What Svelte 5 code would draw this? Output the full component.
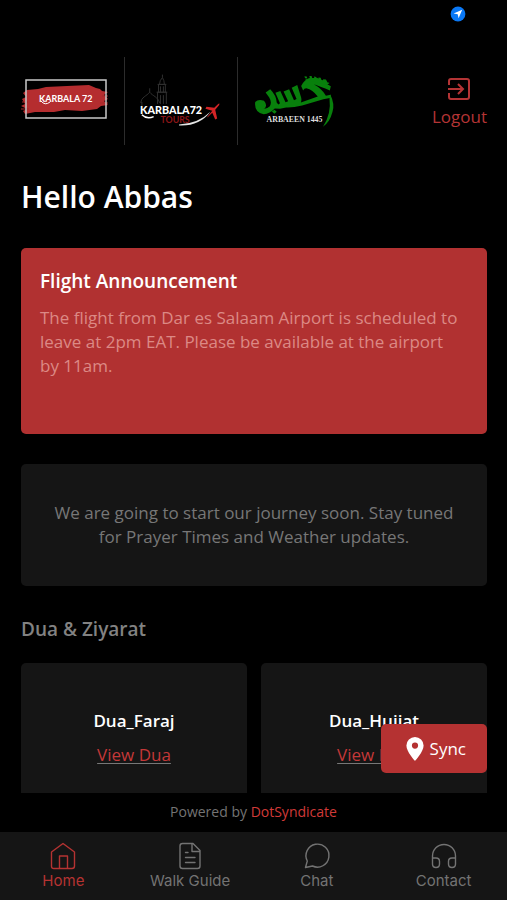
<script>
  const duas = ['Dua_Faraj', 'Dua_Hujjat'];
  const tabs = [
    { label: 'Home', icon: 'home', active: true },
    { label: 'Walk Guide', icon: 'guide' },
    { label: 'Chat', icon: 'chat' },
    { label: 'Contact', icon: 'contact' }
  ];
</script>

<div class="app">
  <div class="status">
    <svg width="16" height="16" viewBox="0 0 16 16" aria-hidden="true">
      <circle cx="8" cy="8" r="7.4" fill="#0a78f5" />
      <path d="M12.2 3.8 3.6 7.5 7.7 8.3 8.6 12.3Z" fill="#fff" />
    </svg>
  </div>

  <header>
    <div class="logos">
      <div class="logo">
        <svg viewBox="0 0 90 88" role="img" aria-label="Karbala 72">
          <path
            d="M3 36 7 33 18 32 26 30 47 29 69 28 76 31 80 32 82 34 88 35 84 38 88 42 84 44 88 48 81 49 77 52 62 54 45 53 34 55 15 55 5 57 3 54 7 52 1 49 5 47 2 42 6 40Z"
            fill="#b52d2f"
          />
          <path d="M2 45h6M1 52h8M82 39h6M80 46h8" stroke="#a3282a" stroke-width="1" />
          <rect x="6" y="23" width="80" height="38" fill="none" stroke="#c9c9c9" stroke-width="1.5" />
          <text x="19" y="45" class="brand-small">KARBALA 72</text>
          <path d="M21 44q4 5 9 1" fill="none" stroke="#fff" />
        </svg>
      </div>
      <div class="logo">
        <svg viewBox="0 0 90 88" role="img" aria-label="Karbala 72 Tours">
          <g fill="none" stroke="#303030" stroke-width="1">
            <path d="M5 49V45M4 46c0-6 6-7 9-11 3 4 9 5 10 11M13 35v-4" />
            <path d="M21 47V35h9v12M20 35h11M22 35V27h7v8M21 27h9M23 27q0-4 3-7 2 3 2 7M26 20v-3M24 29v6M27 29v6M24 38v9M27 38v9" />
          </g>
          <text x="24" y="66" class="tours">TOURS</text>
          <text x="3" y="57" class="brand">KARBALA72</text>
          <path d="M5 58q5 5 12 2" fill="none" stroke="#fff" stroke-width="1.5" />
          <path d="M43 68Q63 67 75 55 64 70 43 69Z" fill="#e5e5e5" />
          <path d="M72 60 77 54 70 52 71 50 79 51 83 47q2-1 1 1l-4 5 2 9-2 1-3-7-5 5Z" fill="#d52426" />
        </svg>
      </div>
      <div class="logo">
        <svg viewBox="0 0 90 88" role="img" aria-label="Husain, Arbaeen 1445">
          <g transform="translate(-15 -7) scale(0.3333)" fill="#08800c">
            <path d="M61 156Q70 146 88 152 100 166 89 177 80 181 74 174 91 183 106 169 113 157 104 142L93 127 107 117Q126 136 127 158L132 164 137 160 123 128 138 122 154 157 162 154 148 124 165 117 180 151 188 147 173 112 190 104 202 142Q204 151 201 158L253 139Q237 119 218 114 211 114 208 121L202 107Q212 87 231 82 249 82 293 108L290 121Q261 109 241 102 266 116 278 137L292 134 294 143 270 148 205 167Q176 174 156 173L137 177 121 176Q106 192 87 194 57 188 61 156Z" />
            <path d="M291 132Q306 162 298 187 290 218 269 232 295 192 289 146Z" />
            <path d="M112 185l8-5 7 6-7 6Z" />
            <path d="M212 77l7 1 2 6-7-1ZM227 76l7 0 2 7-7 0ZM241 78l7 1 2 7-7-1ZM255 81l7 1 2 7-7-1ZM269 86l9 1 5 9-11-2ZM213 87 248 81 289 98 281 104Z" />
          </g>
          <text x="17" y="65" class="arbaeen">ARBAEEN 1445</text>
        </svg>
      </div>
    </div>
    <button class="logout" type="button">
      <svg width="24" height="24" viewBox="0 0 24 24" fill="none" stroke="currentColor" stroke-width="2" aria-hidden="true">
        <path d="M2 8V4q0-2 2-2h16q2 0 2 2v16q0 2-2 2H4q-2 0-2-2v-4M1 12h15M11 7l5 5-5 5" />
      </svg>
      <span>Logout</span>
    </button>
  </header>

  <main>
    <h1>Hello Abbas</h1>

    <section class="announcement">
      <h2>Flight Announcement</h2>
      <p>The flight from Dar es Salaam Airport is scheduled to leave at 2pm EAT. Please be available at the airport by 11am.</p>
    </section>

    <section class="notice">
      <p>We are going to start our journey soon. Stay tuned for Prayer Times and Weather updates.</p>
    </section>

    <h3>Dua &amp; Ziyarat</h3>
    <div class="duas">
      {#each duas as dua}
        <article>
          <h4>{dua}</h4>
          <a href="#dua">View Dua</a>
        </article>
      {/each}
    </div>

    <button class="sync" type="button">
      <svg width="18" height="24" viewBox="0 0 18 24" aria-hidden="true">
        <path fill="#fff" fill-rule="evenodd" d="M9 0a8.6 8.6 0 0 0-8.6 8.6C.4 15 9 24 9 24s8.6-9 8.6-15.4A8.6 8.6 0 0 0 9 0Zm0 5.5a3.1 3.1 0 1 1 0 6.2 3.1 3.1 0 0 1 0-6.2Z" />
      </svg>
      Sync
    </button>
  </main>

  <footer>Powered by <a href="#dotsyndicate">DotSyndicate</a></footer>

  <nav>
    {#each tabs as tab}
      <a href="#{tab.icon}" class:active={tab.active}>
        <svg width="28" height="28" viewBox="0 0 28 28" fill="none" stroke="currentColor" stroke-width="1.4" stroke-linecap="round" stroke-linejoin="round" aria-hidden="true">
          {#if tab.icon === 'home'}
            <path d="M2.5 10 14 1.5 25.5 10v14q0 2.5-2.5 2.5H5q-2.5 0-2.5-2.5ZM10.5 26.500V14h8v12.5" />
          {:else if tab.icon === 'guide'}
            <path d="M17 1.5H6.5Q4 1.5 4 4v20q0 2.5 2.5 2.5h15Q24 26.5 24 24V8.5ZM16 1.5V9.500h8M9.500 10.500h2.5M9.500 15.500h9.500M9.500 20.500h9.500" />
          {:else if tab.icon === 'chat'}
            <path d="M2.500 25.500 4.300 19A11.500 11.500 0 1 1 9.500 24Z" />
          {:else}
            <path d="M2.500 18v-4a11.500 11.500 0 0 1 23 0v4M2.500 16H6q3.500 0 3.500 3.500V22q0 3.500-3.500 3.500T2.500 22ZM25.500 16H22q-3.500 0-3.500 3.500V22q0 3.500 3.500 3.500t3.500-3.500Z" />
          {/if}
        </svg>
        <span>{tab.label}</span>
      </a>
    {/each}
  </nav>
</div>

<style>
  :global(body) {
    margin: 0;
    background: #000;
  }
  .app {
    display: flex;
    flex-direction: column;
    height: 100vh;
    overflow: hidden;
    background: #000;
    color: #fff;
    font-family: "Open Sans", "Noto Sans", sans-serif;
    font-size: 17px;
    line-height: 24px;
  }
  h1, h2, h3, h4, p {
    margin: 0;
  }
  button {
    border: 0;
    background: none;
    font: inherit;
    cursor: pointer;
  }
  .status {
    display: flex;
    justify-content: flex-end;
    height: 51px;
    padding: 6px 41px 0 20px;
    box-sizing: border-box;
    flex: none;
  }
  header {
    display: flex;
    justify-content: space-between;
    align-items: center;
    flex: none;
    padding: 6px 20px 0;
  }
  .logos {
    display: flex;
  }
  .logo {
    height: 88px;
    padding: 0 12px;
    border-left: 1px solid #2c2c2c;
  }
  .logo:first-child {
    border: 0;
    padding: 0 14px 0 0;
  }
  .logo svg {
    display: block;
    width: 88px;
    height: 88px;
    overflow: visible;
  }
  .logo:first-child svg {
    width: 90px;
  }
  .brand-small {
    font: 700 9px Lato, sans-serif;
    fill: #fff;
  }
  .brand {
    font: 900 11px Lato, sans-serif;
    fill: #fff;
  }
  .tours {
    font: 700 9px Lato, sans-serif;
    fill: #8c1517;
  }
  .arbaeen {
    font: 700 8px "Liberation Serif", serif;
    fill: #ddd;
  }
  .logout {
    display: flex;
    flex-direction: column;
    align-items: center;
    gap: 4px;
    padding: 3px 0 0;
    color: #b43435;
  }
  main {
    position: relative;
    flex: 1;
    min-height: 0;
    overflow: hidden;
    padding: 33px 20px 0 21px;
  }
  h1 {
    font-size: 30px;
    line-height: 38px;
    font-weight: 600;
  }
  .announcement {
    margin-top: 32px;
    min-height: 186px;
    padding: 19px 24px 20px 19px;
    box-sizing: border-box;
    border-radius: 5px;
    background: #b13131;
  }
  h2 {
    font-size: 19px;
    line-height: 28px;
    font-weight: 600;
  }
  .announcement p {
    margin-top: 11px;
    color: #dc8985;
  }
  .notice {
    margin-top: 30px;
    padding: 37px 24px;
    border-radius: 5px;
    background: #151515;
    color: #777;
    text-align: center;
  }
  h3 {
    margin-top: 31px;
    color: #828282;
    font-size: 19px;
    line-height: 24px;
    font-weight: 600;
  }
  .duas {
    display: grid;
    grid-template-columns: 1fr 1fr;
    gap: 14px;
    margin-top: 22px;
  }
  article {
    display: flex;
    flex-direction: column;
    align-items: center;
    gap: 10px;
    padding: 46px 20px;
    border-radius: 5px;
    background: #151515;
  }
  h4 {
    font-size: 17px;
    line-height: 24px;
    font-weight: 600;
  }
  article a {
    color: #c43838;
    text-decoration-color: #777;
    text-underline-offset: 2px;
  }
  .sync {
    position: absolute;
    right: 20px;
    bottom: 20px;
    display: flex;
    align-items: center;
    gap: 6px;
    height: 49px;
    padding: 0 21px 0 25px;
    border-radius: 5px;
    background: #b53232;
    color: #fff;
  }
  footer {
    flex: none;
    padding: 7px 0 8px;
    color: #747474;
    text-align: center;
    font-size: 14px;
  }
  footer a {
    color: #d13a38;
    text-decoration: none;
  }
  nav {
    display: grid;
    grid-template-columns: repeat(4, 1fr);
    flex: none;
    height: 68px;
    background: #151515;
    font-family: Inter, sans-serif;
    font-size: 15px;
    line-height: 20px;
  }
  nav a {
    display: flex;
    flex-direction: column;
    align-items: center;
    gap: 1px;
    padding-top: 10px;
    color: #737373;
    text-decoration: none;
  }
  nav a.active {
    color: #b53332;
  }
</style>
